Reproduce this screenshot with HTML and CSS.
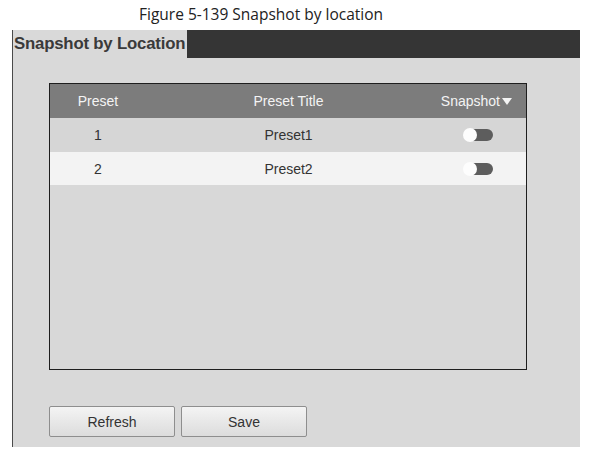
FILE: index.html
```html
<!DOCTYPE html>
<html>
<head>
<meta charset="utf-8">
<link rel="stylesheet" href="styles.css">
</head>
<body>
<div class="caption">Figure 5-139 Snapshot by location</div>
<div class="panel">
  <div class="titlebar">
    <div class="title">Snapshot by Location</div>
    <div class="bar"></div>
  </div>
  <div class="content">
    <div class="table">
      <div class="row head">
        <div class="c1">Preset</div>
        <div class="c2">Preset Title</div>
        <div class="c3">Snapshot<span class="arrow"></span></div>
      </div>
      <div class="row odd">
        <div class="c1">1</div>
        <div class="c2">Preset1</div>
        <div class="c3"><span class="toggle"><span class="knob"></span></span></div>
      </div>
      <div class="row even">
        <div class="c1">2</div>
        <div class="c2">Preset2</div>
        <div class="c3"><span class="toggle"><span class="knob"></span></span></div>
      </div>
    </div>
    <div class="buttons">
      <button class="btn">Refresh</button>
      <button class="btn">Save</button>
    </div>
  </div>
</div>
</body>
</html>
```
FILE: styles.css
```css
* { box-sizing: border-box; }
html, body { margin: 0; padding: 0; background: #fff; }
body { width: 589px; height: 455px; font-family: "Liberation Sans", Arial, sans-serif; }

.caption {
  height: 30px;
  padding-top: 4px;
  padding-left: 139px;
  font-family: "Open Sans", "DejaVu Sans", sans-serif;
  font-size: 15.5px;
  color: #222;
  line-height: 21px;
}

.panel {
  margin-left: 12px;
  width: 568px;
  height: 417px;
  background: #d9d9d9;
  border-left: 1.5px solid #4a4a4a;
  display: flex;
  flex-direction: column;
}

.titlebar { display: flex; height: 28px; }
.title {
  width: 174px;
  padding-left: 1px;
  font-weight: bold;
  font-size: 16.8px;
  color: #3a3a3a;
  line-height: 28px;
  letter-spacing: -0.2px;
  white-space: nowrap;
}
.bar { flex: 1; background: #353535; }

.content { padding-left: 36px; padding-top: 25px; }

.table {
  width: 478px;
  height: 287px;
  border: 1px solid #1e1e1e;
  background: #d8d8d8;
}
.row { display: flex; align-items: center; font-size: 14px; color: #333; }
.row.head { height: 34px; background: #7c7c7c; color: #f4f4f4; }
.row.odd { height: 34px; background: #d6d6d6; }
.row.even { height: 33px; background: #f3f3f3; }
.c1 { width: 96px; text-align: center; }
.c2 { width: 285px; text-align: center; }
.c3 { flex: 1; display: flex; justify-content: flex-end; align-items: center; padding-right: 14px; }
.row .c3 .toggle { margin-right: 19px; }
.arrow {
  display: inline-block;
  width: 0; height: 0;
  margin-left: 2px;
  border-left: 5px solid transparent;
  border-right: 5px solid transparent;
  border-top: 7px solid #f4f4f4;
}
.toggle {
  position: relative;
  display: inline-block;
  width: 29px;
  height: 12px;
  border-radius: 6px;
  background: #5d5d5d;
}
.knob {
  position: absolute;
  left: -1px; top: -1px;
  width: 14px; height: 14px;
  border-radius: 50%;
  background: #fdfdfd;
}

.buttons { display: flex; gap: 6px; margin-top: 36px; }
.btn {
  width: 126px;
  height: 31px;
  border: 1px solid #8e8e8e;
  border-radius: 2px;
  background: linear-gradient(#f4f4f4, #dcdcdc);
  font-family: "Liberation Sans", Arial, sans-serif;
  font-size: 14px;
  color: #333;
  padding: 0;
}
```
